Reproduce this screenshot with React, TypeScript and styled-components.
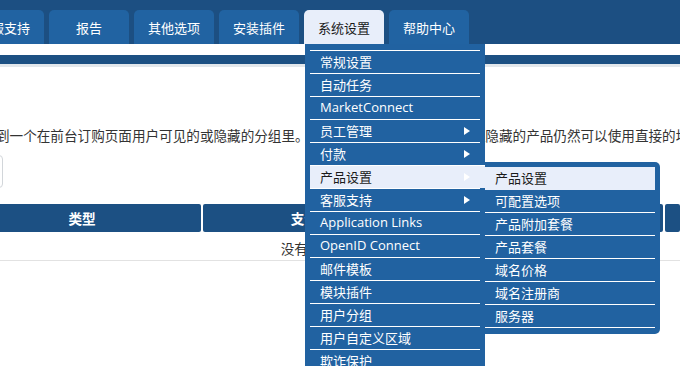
import React from 'react';
import styled, { createGlobalStyle } from 'styled-components';

const GlobalStyle = createGlobalStyle`
  html, body { margin: 0; padding: 0; background: #fff; }
  body {
    font-family: "Open Sans", "Noto Sans CJK SC", sans-serif;
    overflow: hidden;
  }
  * { box-sizing: border-box; }
`;

const Page = styled.div`
  position: relative;
  width: 680px;
  height: 366px;
  overflow: hidden;
  background: #fff;
`;

const TopBar = styled.div`
  height: 44px;
  background: #1c4f82;
  padding-top: 10px;
`;

const TabList = styled.ul`
  display: flex;
  gap: 5px;
  margin: 0 0 0 -36px;
  padding: 0;
  list-style: none;
`;

const Tab = styled.li<{ $active?: boolean }>`
  flex: none;
  width: 80px;
  height: 34px;
  border-radius: 5px 5px 0 0;
  background: ${(p) => (p.$active ? '#e8eefa' : '#2163a2')};
  color: ${(p) => (p.$active ? '#1a1a1a' : '#ffffff')};
  font-size: 13px;
  display: flex;
  align-items: center;
  justify-content: center;
`;

const WhiteStrip = styled.div`
  height: 11px;
  background: #fff;
`;

const SubBar = styled.div`
  height: 9px;
  background: #1c5083;
`;

const Shade = styled.div`
  height: 3px;
  background: #e2e7eb;
`;

const Content = styled.div`
  width: 717px;
  margin-left: -37px;
  padding-top: 59px;
`;

const Description = styled.p`
  margin: 0 0 9px;
  padding-left: 33px;
  height: 20px;
  line-height: 20px;
  font-size: 13.6px;
  color: #333;
  white-space: nowrap;
`;

const FilterBox = styled.div`
  width: 40px;
  height: 33px;
  border: 1px solid #d2d6da;
  border-radius: 4px;
  margin-bottom: 16px;
`;

const TableGrid = styled.div`
  display: grid;
  grid-template-columns: 238px 230px 228px 1fr;
  column-gap: 2px;
`;

const HeadCell = styled.div`
  height: 28px;
  background: #1c5083;
  border-radius: 2px;
  color: #fff;
  font-weight: 700;
  font-size: 13.6px;
  display: flex;
  align-items: center;
  justify-content: center;
  white-space: nowrap;
  overflow: hidden;
`;

const EmptyRow = styled.div`
  height: 29px;
  padding-top: 3px;
  border-bottom: 1px solid #e2e2e2;
  display: flex;
  align-items: center;
  justify-content: center;
  font-size: 13.6px;
  color: #333;
`;

const Dropdown = styled.ul`
  position: absolute;
  left: 305px;
  top: 44px;
  width: 180px;
  height: 340px;
  margin: 0;
  padding: 6px 5px 0 5px;
  list-style: none;
  background: #2162a1;
`;

const MenuItem = styled.li<{ $active?: boolean }>`
  display: flex;
  align-items: center;
  height: 23px;
  border-top: 1px solid #fff;
  padding: 0 ${(p) => (p.$active ? 15 : 10)}px 2px 10px;
  margin-right: ${(p) => (p.$active ? -5 : 0)}px;
  font-size: 13px;
  white-space: nowrap;
  color: ${(p) => (p.$active ? '#1a1a1a' : '#fff')};
  background: ${(p) => (p.$active ? '#e8eefa' : 'transparent')};
`;

const Label = styled.span`
  flex: 1;
`;

const Caret = styled.span`
  width: 0;
  height: 0;
  margin-top: 2px;
  border-left: 6px solid #fff;
  border-top: 4px solid transparent;
  border-bottom: 4px solid transparent;
`;

const SubMenu = styled.ul`
  position: absolute;
  left: 485px;
  top: 162px;
  width: 175px;
  margin: 0;
  padding: 5px 5px 6px 0;
  list-style: none;
  background: #2162a1;
  border-radius: 0 5px 5px 0;
`;

const SubItem = styled.li<{ $active?: boolean }>`
  display: flex;
  align-items: center;
  height: 23px;
  border-bottom: 1px solid ${(p) => (p.$active ? '#e8eefa' : '#fff')};
  padding: 0 10px 2px;
  font-size: 13px;
  white-space: nowrap;
  color: ${(p) => (p.$active ? '#1a1a1a' : '#fff')};
  background: ${(p) => (p.$active ? '#e8eefa' : 'transparent')};
`;

const tabs = ['客服支持', '报告', '其他选项', '安装插件', '系统设置', '帮助中心'];

const menu: { label: string; sub?: boolean }[] = [
  { label: '常规设置' },
  { label: '自动任务' },
  { label: 'MarketConnect' },
  { label: '员工管理', sub: true },
  { label: '付款', sub: true },
  { label: '产品设置', sub: true },
  { label: '客服支持', sub: true },
  { label: 'Application Links' },
  { label: 'OpenID Connect' },
  { label: '邮件模板' },
  { label: '模块插件' },
  { label: '用户分组' },
  { label: '用户自定义区域' },
  { label: '欺诈保护' },
];

const subItems = ['产品设置', '可配置选项', '产品附加套餐', '产品套餐', '域名价格', '域名注册商', '服务器'];

export default function App() {
  return (
    <>
      <GlobalStyle />
      <Page>
        <TopBar>
          <TabList>
            {tabs.map((t) => (
              <Tab key={t} $active={t === '系统设置'}>
                {t}
              </Tab>
            ))}
          </TabList>
        </TopBar>
        <WhiteStrip />
        <SubBar />
        <Shade />
        <Content>
          <Description>
            到一个在前台订购页面用户可见的或隐藏的分组里。隐藏分组里的产品不显示，但隐藏的产品仍然可以使用直接的地址进行订购。
          </Description>
          <FilterBox />
          <TableGrid>
            <HeadCell>类型</HeadCell>
            <HeadCell>支付类型</HeadCell>
            <HeadCell>库存</HeadCell>
            <HeadCell />
          </TableGrid>
          <EmptyRow>没有找到记录</EmptyRow>
        </Content>

        <Dropdown>
          {menu.map((m) => (
            <MenuItem key={m.label} $active={m.label === '产品设置'}>
              <Label>{m.label}</Label>
              {m.sub && <Caret />}
            </MenuItem>
          ))}
        </Dropdown>

        <SubMenu>
          {subItems.map((s, i) => (
            <SubItem key={s} $active={i === 0}>
              {s}
            </SubItem>
          ))}
        </SubMenu>
      </Page>
    </>
  );
}
